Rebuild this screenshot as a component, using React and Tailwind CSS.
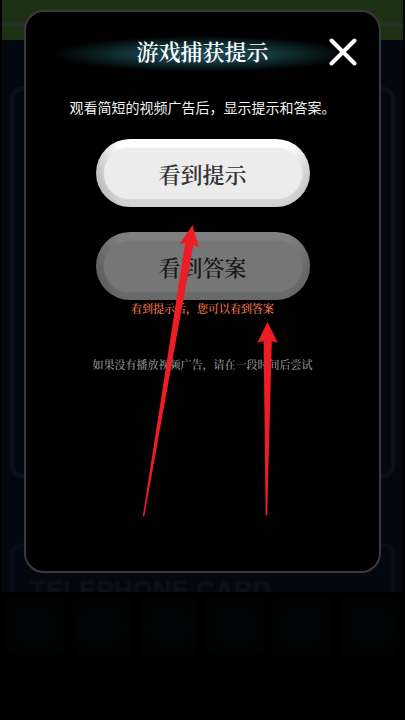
import React, { useState } from 'react';

const serif = "font-['Noto_Serif_CJK_SC','Noto_Sans_CJK_SC',serif]";
const sans = "font-['Noto_Sans_CJK_SC',sans-serif]";

const CloseIcon = () => (
  <svg viewBox="0 0 28 28" className="h-7 w-7" fill="none" stroke="currentColor" strokeWidth="4" strokeLinecap="round">
    <path d="M2.5 2.5 25.5 25.5M25.5 2.5 2.5 25.5" />
  </svg>
);

const PillButton = ({ children, disabled, onClick }) => (
  <button
    type="button"
    disabled={disabled}
    onClick={onClick}
    className="h-[68px] w-[214px] rounded-full bg-[linear-gradient(90deg,#0000002e,transparent_12%,transparent_90%,#0000001f),linear-gradient(180deg,#ffffff_15%,#e4e4e4_60%,#d0d0d0)] p-2 pt-[9px] disabled:opacity-50"
  >
    <span className={`flex h-full items-center justify-center rounded-full bg-[#ececec] pb-px text-[22px] font-semibold text-[#333333] shadow-[0_0_2px_#e4e4e4] ${serif}`}>
      {children}
    </span>
  </button>
);

// Dimmed game board behind the dialog
const Board = () => (
  <div aria-hidden="true" className="mx-[2px]">
    <div className="flex h-10 flex-col justify-center bg-[#1c3013] pt-2">
      <div className="h-[5px] bg-[#263129] blur-[1px]" />
    </div>
    <div className="h-[552px] overflow-hidden bg-[#03070f] px-2 pt-[47px]">
      <div className="h-[391px] rounded-xl border-4 border-[#0d131c] blur-[1px]" />
      <div className="mt-[65px] h-20 rounded-xl border-4 border-[#090e17] px-4 pt-6 font-['Liberation_Sans',sans-serif] text-[26px] font-bold whitespace-nowrap text-[#0e131b] blur-[1px]">
        TELEPHONE CARD
      </div>
    </div>
    <div className="grid grid-cols-6 gap-2 px-1 pt-[5px]">
      {[...Array(6)].map((_, idx) => (
        <div key={idx} className="h-[58px] rounded-lg bg-[radial-gradient(circle,#030507,#010202_75%)]" />
      ))}
    </div>
  </div>
);

const Arrows = () => (
  <svg
    aria-hidden="true"
    viewBox="-10 0 160 295"
    className="pointer-events-none absolute top-[212px] left-1/2 h-[295px] w-40 -translate-x-1/2"
    fill="#ee1c24"
  >
    <path d="M59.5 1 65.8 23 60.2 21.3 11.2 292.5 9.8 292.3 52.2 18.7 46.5 20.3Z" />
    <path d="M134.5 98 144.8 118.7 138.8 117.2 134.2 291.5 132.6 291.5 130.6 117.2 124.3 118.7Z" />
  </svg>
);

const App = () => {
  const [open, setOpen] = useState(true);
  const [hintSeen, setHintSeen] = useState(false);

  return (
    <div className="relative min-h-screen overflow-hidden bg-black">
      <Board />

      {open && (
        <div className="absolute inset-0 px-6 pt-[10px]">
          <section
            role="dialog"
            aria-labelledby="hint-title"
            className="relative min-h-[563px] rounded-[20px] border-2 border-[#3d3939] bg-black text-center"
          >
            <header className="grid h-[78px] grid-cols-[50px_1fr_50px] items-center bg-[radial-gradient(ellipse_150px_18px_at_50%_42px,#1c4d59,#14383f_45%,transparent)]">
              <h2 id="hint-title" className={`col-start-2 pb-px text-[22px] font-semibold text-white ${serif}`}>
                游戏捕获提示
              </h2>
              <button type="button" aria-label="关闭" onClick={() => setOpen(false)} className="pt-px text-white">
                <CloseIcon />
              </button>
            </header>

            <p className={`mt-[7px] text-sm text-[#f2f2f2] ${sans}`}>观看简短的视频广告后，显示提示和答案。</p>

            <div className="mt-[22px] flex flex-col items-center gap-[25px]">
              <PillButton onClick={() => setHintSeen(true)}>看到提示</PillButton>
              <PillButton disabled={!hintSeen}>看到答案</PillButton>
            </div>

            <p className={`text-[11px] leading-4 font-medium text-[#ff7f4c] ${serif}`}>看到提示后，您可以看到答案</p>
            <p className={`mt-10 text-[11px] leading-4 font-medium text-[#999999] ${serif}`}>
              如果没有播放视频广告，请在一段时间后尝试
            </p>

            <Arrows />
          </section>
        </div>
      )}
    </div>
  );
};

export default App;
